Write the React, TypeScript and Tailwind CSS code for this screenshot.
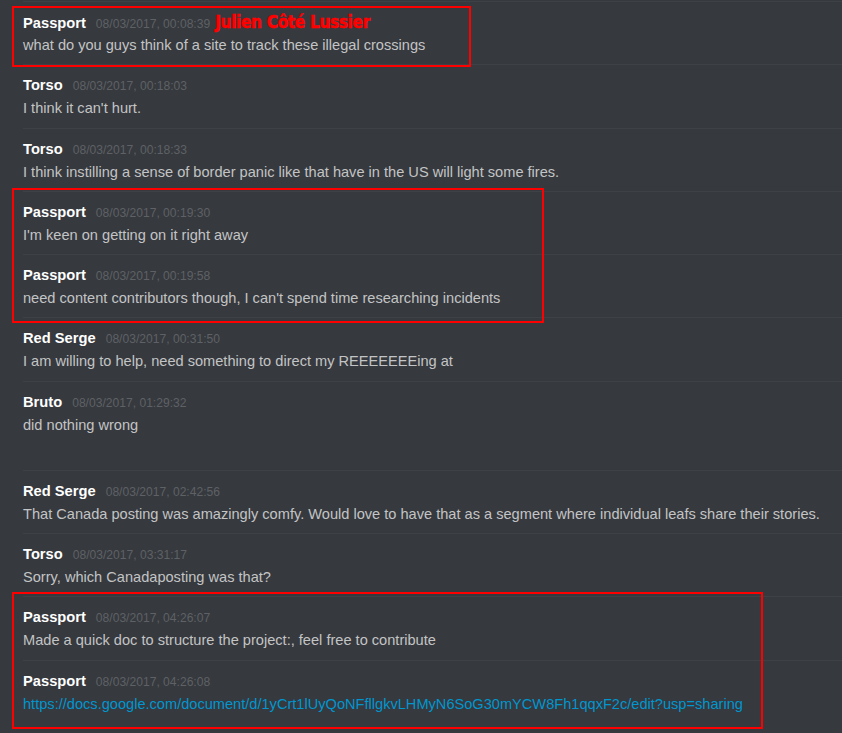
import React from "react";

type Msg = { name: string; time: string; body: string; link?: boolean; extra?: boolean; note?: string };

function Message({ m }: { m: Msg }) {
  return (
    <div className={`border-t border-[#3e4146] pt-[11px] ${m.extra ? "pb-[36px]" : "pb-[10.3px]"}`}>
      <div className="flex items-baseline h-[18px] leading-[18px] whitespace-nowrap">
        <span className="text-white font-bold text-[14.7px]">{m.name}</span>
        <span className="ml-[10px] text-[#5e6165] text-[12.1px]">{m.time}</span>
        {m.note && (
          <span
            className="ml-[5px] text-[#ff0000] font-bold text-[17px] tracking-[-0.3px] [-webkit-text-stroke:0.5px_#ff0000]"
            style={{ fontFamily: '"DejaVu Sans Condensed", "DejaVu Sans", sans-serif' }}
          >
            {m.note}
          </span>
        )}
      </div>
      <div
        className={`mt-[5px] h-[18px] leading-[18px] text-[14.6px] whitespace-nowrap ${
          m.link ? "text-[#0096cf]" : "text-[#c3c4c5]"
        }`}
      >
        {m.body}
      </div>
    </div>
  );
}

function Boxed({ w, h, top, children }: { w: string; h: string; top: string; children: React.ReactNode }) {
  return (
    <div className="relative">
      {children}
      <div className={`absolute left-[-11px] border-2 border-[#ff0000] pointer-events-none ${w} ${h} ${top}`} />
    </div>
  );
}

export default function App() {
  return (
    <div
      className="w-[842px] h-[733px] overflow-hidden bg-[#36393e] pl-[23px] pt-px flex flex-col"
      style={{ fontFamily: '"Liberation Sans", Arial, sans-serif' }}
    >
      <Boxed w="w-[459px]" h="h-[61px]" top="top-[5px]">
        <Message
          m={{
            name: "Passport",
            time: "08/03/2017, 00:08:39",
            body: "what do you guys think of a site to track these illegal crossings",
            note: "Julien Côté Lussier",
          }}
        />
      </Boxed>
      <Message m={{ name: "Torso", time: "08/03/2017, 00:18:03", body: "I think it can't hurt." }} />
      <Message
        m={{
          name: "Torso",
          time: "08/03/2017, 00:18:33",
          body: "I think instilling a sense of border panic like that have in the US will light some fires.",
        }}
      />
      <Boxed w="w-[532px]" h="h-[135px]" top="top-[-3px]">
        <Message m={{ name: "Passport", time: "08/03/2017, 00:19:30", body: "I'm keen on getting on it right away" }} />
        <Message
          m={{
            name: "Passport",
            time: "08/03/2017, 00:19:58",
            body: "need content contributors though, I can't spend time researching incidents",
          }}
        />
      </Boxed>
      <Message
        m={{ name: "Red Serge", time: "08/03/2017, 00:31:50", body: "I am willing to help, need something to direct my REEEEEEEing at" }}
      />
      <Message m={{ name: "Bruto", time: "08/03/2017, 01:29:32", body: "did nothing wrong", extra: true }} />
      <Message
        m={{
          name: "Red Serge",
          time: "08/03/2017, 02:42:56",
          body: "That Canada posting was amazingly comfy. Would love to have that as a segment where individual leafs share their stories.",
        }}
      />
      <Message m={{ name: "Torso", time: "08/03/2017, 03:31:17", body: "Sorry, which Canadaposting was that?" }} />
      <Boxed w="w-[751px]" h="h-[137px]" top="top-[-4px]">
        <Message
          m={{ name: "Passport", time: "08/03/2017, 04:26:07", body: "Made a quick doc to structure the project:, feel free to contribute" }}
        />
        <Message
          m={{
            name: "Passport",
            time: "08/03/2017, 04:26:08",
            body: "https://docs.google.com/document/d/1yCrt1lUyQoNFfllgkvLHMyN6SoG30mYCW8Fh1qqxF2c/edit?usp=sharing",
            link: true,
          }}
        />
      </Boxed>
    </div>
  );
}
